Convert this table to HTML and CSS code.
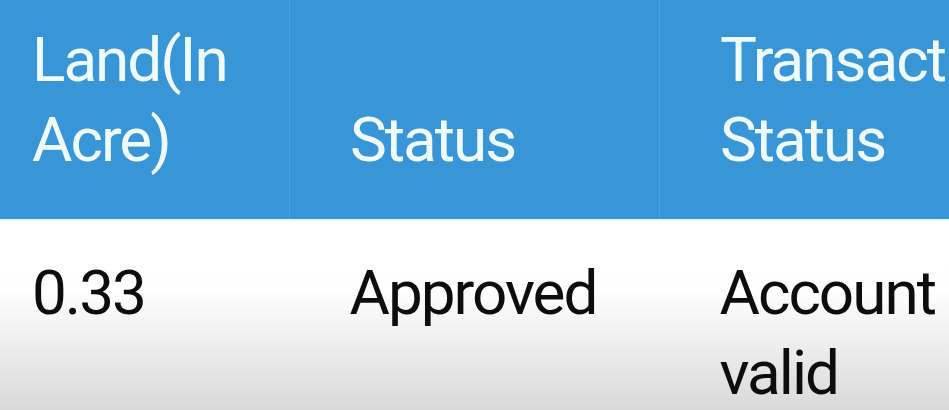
FILE: index.html
```html
<!DOCTYPE html>
<html>
<head>
<meta charset="utf-8">
<link rel="stylesheet" href="styles.css">
</head>
<body>
<table class="grid">
  <thead>
    <tr>
      <th class="c1">Land(In<br>Acre)</th>
      <th class="c2">Status</th>
      <th class="c3">Transaction Status</th>
    </tr>
  </thead>
  <tbody>
    <tr>
      <td class="c1">0.33</td>
      <td class="c2">Approved</td>
      <td class="c3">Account<br>valid</td>
    </tr>
  </tbody>
</table>
</body>
</html>
```
FILE: styles.css
```css
html, body {
  margin: 0;
  padding: 0;
  width: 949px;
  height: 410px;
  overflow: hidden;
  background: #fff;
}
.grid {
  border-collapse: collapse;
  table-layout: fixed;
  width: 1100px;
  font-family: Roboto, "Noto Sans", sans-serif;
  font-size: 62px;
  line-height: 80px;
  letter-spacing: -2px;
}
.grid th {
  background: #3996d6;
  color: #effaff;
  font-weight: 400;
  text-align: left;
  vertical-align: bottom;
  height: 160px;
  padding: 20px 0 39px 0;
  white-space: normal;
  border-left: 1px solid #4aa2e0;
}
.grid th.c1 { border-left: none; }
.grid tbody tr {
  background: linear-gradient(to bottom, #ffffff 0px, #fefefe 70px, #ececec 130px, #d9d9d9 190px);
}
.grid td {
  color: #0d0d0d;
  vertical-align: top;
  padding: 32px 0 0 0;
  height: 158px;
  text-align: left;
  border-top: 2px solid #e8f6fd;
}
.c1 { width: 257px; padding-left: 32px !important; }
.c2 { width: 309px; padding-left: 60px !important; }
.c3 { width: 400px; padding-left: 60px !important; overflow: hidden; }
```
